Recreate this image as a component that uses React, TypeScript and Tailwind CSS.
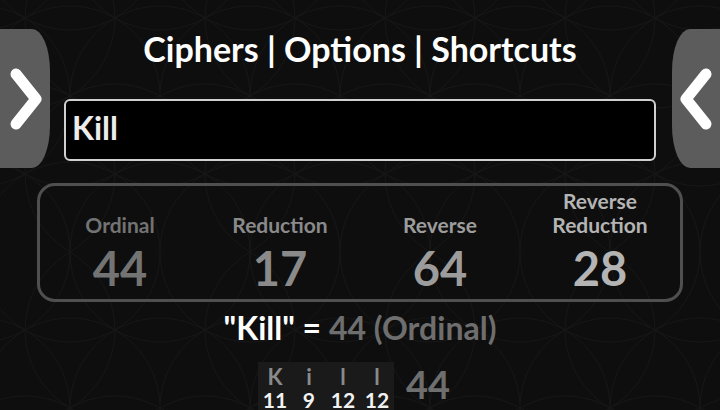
const CIPHERS = [
  { name: 'Ordinal', value: 44, color: 'text-[#737373]' },
  { name: 'Reduction', value: 17, color: 'text-[#8a8a8a]' },
  { name: 'Reverse', value: 64, color: 'text-[#9c9c9c]' },
  { name: 'Reverse Reduction', value: 28, color: 'text-[#b4b4b4]' },
];

const BREAKDOWN = [
  { ch: 'K', n: 11 },
  { ch: 'i', n: 9 },
  { ch: 'l', n: 12 },
  { ch: 'l', n: 12 },
];

const FlowerBg = () => (
  <svg className="absolute inset-0 h-full w-full" aria-hidden>
    <defs>
      <pattern id="fol" width="180" height="312" patternUnits="userSpaceOnUse" x="-20" y="-60">
        {[
          [0, 0], [180, 0], [90, 0], [0, 156], [180, 156], [90, 156], [0, 312], [180, 312], [90, 312],
          [45, 78], [135, 78], [45, 234], [135, 234],
        ].map(([cx, cy], i) => (
          <circle key={i} cx={cx} cy={cy} r="90" fill="none" stroke="#ffffff" strokeWidth="1" />
        ))}
      </pattern>
    </defs>
    <rect width="100%" height="100%" fill="url(#fol)" opacity="0.035" />
  </svg>
);

const SideTab = ({ side }: { side: 'left' | 'right' }) => (
  <button
    className={
      side === 'left'
        ? 'absolute left-0 top-[29px] h-[139px] w-[50px] bg-[#5c5c5c] rounded-tr-[18px_42px] rounded-br-[18px_42px]'
        : 'absolute right-0 top-[29px] h-[139px] w-[48px] bg-[#5c5c5c] rounded-tl-[18px_42px] rounded-bl-[18px_42px]'
    }
  >
    <svg width="48" height="139" viewBox="0 0 48 139" className="absolute left-0 top-0">
      {side === 'left' ? (
        <polyline points="16,45 36,70 16,95" fill="none" stroke="#fff" strokeWidth="11" strokeLinecap="round" strokeLinejoin="round" />
      ) : (
        <polyline points="34,45 14,70 34,95" fill="none" stroke="#fff" strokeWidth="11" strokeLinecap="round" strokeLinejoin="round" />
      )}
    </svg>
  </button>
);

export default function App() {
  return (
    <div className="relative h-[410px] w-[720px] overflow-hidden bg-[#0e0e0e] font-['Lato',sans-serif] font-bold">
      <FlowerBg />
      <div className="relative flex flex-col items-center">
        <h1 className="mt-[29px] text-[34px] leading-[40px] text-white">
          Ciphers | Options | Shortcuts
        </h1>

        <div className="mt-[30px] flex h-[62px] w-[592px] items-center rounded-[6px] border-2 border-[#d0d0d0] bg-black px-[6px] pb-[4px]">
          <span className="text-[32px] leading-[38px] text-[#ececec]">Kill</span>
        </div>

        <div className="mt-[22px] grid h-[119px] w-[646px] grid-cols-4 rounded-[18px] border-[3px] border-[#4f4f4f]">
          {CIPHERS.map((c) => (
            <div key={c.name} className={`flex flex-col items-center justify-end pb-[7px] ${c.color}`}>
              <div className="w-[130px] text-center text-[21px] leading-[24px]">{c.name}</div>
              <div className="mt-[7px] text-[47px] leading-[48px]">{c.value}</div>
            </div>
          ))}
        </div>

        <div className="mt-[7px] text-[32px] leading-[38px]">
          <span className="text-white">"Kill" = </span>
          <span className="text-[#6e6e6e]">44 (Ordinal)</span>
        </div>

        <div className="mt-[15px] flex items-start gap-[12px] pr-[12px]">
          <div className="flex bg-[#1a1a1a] pt-[3px]">
            {BREAKDOWN.map((b, i) => (
              <div key={i} className="flex w-[34px] flex-col items-center">
                <span className="text-[22px] leading-[24px] text-[#8a8a8a]">{b.ch}</span>
                <span className="text-[21px] leading-[22px] text-[#f2f2f2]">{b.n}</span>
              </div>
            ))}
          </div>
          <span className="text-[38px] leading-[44px] text-[#6e6e6e]">44</span>
        </div>
      </div>
      <SideTab side="left" />
      <SideTab side="right" />
    </div>
  );
}
